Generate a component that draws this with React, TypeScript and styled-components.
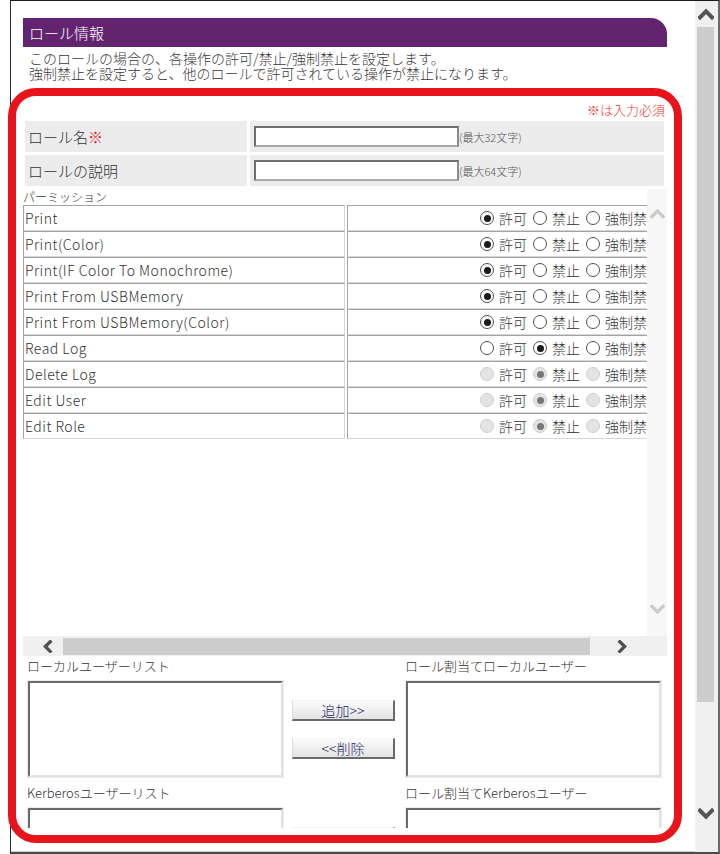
import React from "react";
import styled, { createGlobalStyle } from "styled-components";

const GlobalStyle = createGlobalStyle`
  html, body { margin: 0; padding: 0; background: #fff; }
  body { font-family: "Noto Sans CJK JP", "Noto Sans", sans-serif; font-weight: 300; color: #3c3c3c; }
  * { box-sizing: border-box; }
`;

type Dir = "up" | "down" | "left" | "right";
const rot: Record<Dir, number> = { up: 0, right: 90, down: 180, left: 270 };

const Chevron = ({ dir, size, color, weight }: { dir: Dir; size: number; color: string; weight: number }) => (
  <svg width={size} height={size} viewBox="0 0 12 12" style={{ display: "block" }}>
    <polyline
      points="1.5,8.5 6,4 10.5,8.5"
      fill="none"
      stroke={color}
      strokeWidth={weight}
      strokeLinecap="square"
      transform={`rotate(${rot[dir]} 6 6)`}
    />
  </svg>
);

const Window = styled.div`
  margin-left: 10px;
  width: 710px;
  height: 854px;
  display: flex;
  border-top: 1px solid #1a1a1a;
  border-left: 1px solid #2a2a2a;
  border-right: 2px solid #6a6a6a;
  border-bottom: 2px solid #4a4a4a;
  background: #fff;
`;

const Page = styled.div`
  flex: 1;
  display: flex;
  flex-direction: column;
  padding-top: 17px;
  min-width: 0;
`;

const TitleBar = styled.div`
  margin-left: 12px;
  width: 644px;
  height: 29px;
  background: #63246f;
  border-top-right-radius: 16px;
  color: #fff;
  font-size: 15px;
  line-height: 29px;
  padding-left: 6px;
`;

const Description = styled.p`
  margin: 4px 0 0 18px;
  font-size: 14px;
  line-height: 15px;
  color: #3a3a3a;
`;

const HighlightFrame = styled.section`
  margin: 7px 0 0 -3px;
  width: 674px;
  height: 755px;
  border: 8px solid #e8141c;
  border-radius: 28px;
`;

const Clip = styled.div`
  height: 732px;
  overflow: hidden;
`;

const RequiredNote = styled.div`
  margin-top: 5px;
  padding-right: 9px;
  text-align: right;
  font-size: 13px;
  line-height: 17px;
  color: #f0362c;
`;

const FieldTable = styled.div`
  margin: 3px 0 0 9px;
  width: 639px;
  display: grid;
  grid-template-columns: 222px 414px;
  grid-auto-rows: 31px;
  gap: 3px;
`;

const FieldLabel = styled.div`
  background: #ececec;
  display: flex;
  align-items: center;
  padding-left: 3px;
  font-size: 15px;
  color: #333;
`;

const Mark = styled.span`
  color: #ee2222;
`;

const FieldValue = styled.div`
  background: #ececec;
  display: flex;
  align-items: center;
  padding-left: 4px;
`;

const TextBox = styled.input`
  width: 205px;
  height: 21px;
  border-style: solid;
  border-width: 2px;
  border-color: #6e6e6e #8a8a8a #a8a8a8 #6e6e6e;
  background: #fff;
  padding: 0 2px;
  font: inherit;
`;

const Hint = styled.span`
  font-size: 11px;
  color: #555;
`;

const PermissionBox = styled.div`
  margin: 3px 0 0 7px;
  width: 644px;
  height: 467px;
  display: grid;
  grid-template-columns: 624px 20px;
  grid-template-rows: 447px 20px;
`;

const PermissionViewport = styled.div`
  overflow: hidden;
`;

const SectionLabel = styled.div`
  font-size: 12px;
  line-height: 16px;
  color: #333;
`;

const PermTable = styled.table`
  border-collapse: separate;
  border-spacing: 2px 0;
  margin-left: -2px;
  width: 646px;
  table-layout: fixed;
`;

const PermCell = styled.td<{ $kind: "name" | "radio" }>`
  height: 26px;
  padding: 0 ${(p) => (p.$kind === "radio" ? "3px" : "0")} 0 ${(p) => (p.$kind === "name" ? "1px" : "0")};
  border-top: 1px solid #a3a3a3;
  border-left: 1px solid #a3a3a3;
  border-bottom: 1px solid #d6d6d6;
  border-right: 1px solid #d6d6d6;
  font-size: 14px;
  letter-spacing: 0.5px;
  color: #333;
  white-space: nowrap;
  vertical-align: middle;
`;

const RadioGroup = styled.div`
  display: flex;
  justify-content: flex-end;
  gap: 6px;
`;

const RadioOption = styled.label`
  display: flex;
  align-items: center;
  gap: 5px;
  font-size: 14px;
  letter-spacing: 0;
  line-height: 18px;
  color: #333;
`;

const RadioMark = styled.span<{ $checked: boolean; $disabled: boolean }>`
  width: 14px;
  height: 14px;
  border-radius: 50%;
  display: inline-flex;
  align-items: center;
  justify-content: center;
  background: ${(p) => (p.$disabled ? "#e4e4e4" : "#fff")};
  border: ${(p) => (p.$disabled ? "1px solid #cdcdcd" : "1.5px solid #505050")};
  &::after {
    content: "";
    width: 7px;
    height: 7px;
    border-radius: 50%;
    background: ${(p) => (p.$disabled ? "#777" : "#1a1a1a")};
    display: ${(p) => (p.$checked ? "block" : "none")};
  }
`;

const VBar = styled.div`
  display: flex;
  flex-direction: column;
  align-items: center;
  background: #f7f7f7;
`;

const VArrow = styled.div<{ $h: number }>`
  height: ${(p) => p.$h}px;
  width: 100%;
  display: flex;
  align-items: center;
  justify-content: center;
`;

const Spacer = styled.div<{ $h?: number }>`
  flex: ${(p) => (p.$h ? `0 0 ${p.$h}px` : "1")};
`;

const HBar = styled.div`
  grid-column: 1 / span 2;
  display: flex;
  background: #f0f0f0;
`;

const HArrow = styled.div<{ $w: number; $pl?: number }>`
  width: ${(p) => p.$w}px;
  padding-left: ${(p) => p.$pl ?? 0}px;
  display: flex;
  align-items: center;
  justify-content: center;
`;

const HThumb = styled.div`
  width: 527px;
  margin: 2px 0 1px;
  background: #cdcdcd;
`;

const HGap = styled.div<{ $w: number }>`
  width: ${(p) => p.$w}px;
`;

const UserSection = styled.div`
  margin: 1px 0 0 11px;
  display: flex;
  flex-direction: column;
`;

const UserGroup = styled.div`
  display: grid;
  grid-template-columns: 256px 122px 256px;
  & + & {
    margin-top: 7px;
  }
`;

const ListLabel = styled.div`
  font-size: 13px;
  line-height: 18px;
  color: #333;
  margin-bottom: 6px;
`;

const ListBox = styled.div`
  margin-left: 1px;
  height: 96px;
  border-style: solid;
  border-width: 2px;
  border-color: #6a6a6a #e2e2e2 #e2e2e2 #6a6a6a;
  box-shadow: 0 0 0 1px #ececec;
  background: #fff;
`;

const ButtonColumn = styled.div`
  display: flex;
  flex-direction: column;
  padding: 19px 0 0 9px;
  gap: 17px;
`;

const ShuttleButton = styled.button`
  width: 103px;
  height: 21px;
  padding: 0;
  border-style: solid;
  border-width: 1px 2px 2px 1px;
  border-color: #f4f4f4 #6a6a6a #6a6a6a #dcdcdc;
  background: linear-gradient(#fcfcfc, #e3e3e3);
  font-family: inherit;
  font-weight: 300;
  font-size: 14px;
  line-height: 17px;
  color: #1f2868;
`;

const BottomStrip = styled.div`
  flex: 1;
  border-bottom: 1px solid #cfcfcf;
`;

const ScrollColumn = styled.div`
  width: 23px;
  background: #f0f0f0;
  display: flex;
  flex-direction: column;
  align-items: flex-start;
`;

const MainArrow = styled.div<{ $h: number }>`
  width: 21px;
  height: ${(p) => p.$h}px;
  display: flex;
  align-items: center;
  justify-content: center;
`;

const MainThumb = styled.div`
  margin-left: 2px;
  width: 17px;
  height: 675px;
  background: #cdcdcd;
`;

type Perm = { name: string; value: number; disabled: boolean };

const perms: Perm[] = [
  { name: "Print", value: 0, disabled: false },
  { name: "Print(Color)", value: 0, disabled: false },
  { name: "Print(IF Color To Monochrome)", value: 0, disabled: false },
  { name: "Print From USBMemory", value: 0, disabled: false },
  { name: "Print From USBMemory(Color)", value: 0, disabled: false },
  { name: "Read Log", value: 1, disabled: false },
  { name: "Delete Log", value: 1, disabled: true },
  { name: "Edit User", value: 1, disabled: true },
  { name: "Edit Role", value: 1, disabled: true },
];

const options = ["許可", "禁止", "強制禁止"];

const UserLists = ({ left, right }: { left: string; right: string }) => (
  <UserGroup>
    <ListLabel>{left}</ListLabel>
    <div />
    <ListLabel>{right}</ListLabel>
    <ListBox />
    <ButtonColumn>
      <ShuttleButton type="button">追加&gt;&gt;</ShuttleButton>
      <ShuttleButton type="button">&lt;&lt;削除</ShuttleButton>
    </ButtonColumn>
    <ListBox />
  </UserGroup>
);

export default function App() {
  return (
    <>
      <GlobalStyle />
      <Window>
        <Page>
          <TitleBar>ロール情報</TitleBar>
          <Description>
            このロールの場合の、各操作の許可/禁止/強制禁止を設定します。
            <br />
            強制禁止を設定すると、他のロールで許可されている操作が禁止になります。
          </Description>
          <HighlightFrame>
            <Clip>
              <RequiredNote>※は入力必須</RequiredNote>
              <FieldTable>
                <FieldLabel>
                  ロール名<Mark>※</Mark>
                </FieldLabel>
                <FieldValue>
                  <TextBox type="text" />
                  <Hint>(最大32文字)</Hint>
                </FieldValue>
                <FieldLabel>ロールの説明</FieldLabel>
                <FieldValue>
                  <TextBox type="text" />
                  <Hint>(最大64文字)</Hint>
                </FieldValue>
              </FieldTable>
              <PermissionBox>
                <PermissionViewport>
                  <SectionLabel>パーミッション</SectionLabel>
                  <PermTable>
                    <colgroup>
                      <col style={{ width: 322 }} />
                      <col style={{ width: 318 }} />
                    </colgroup>
                    <tbody>
                      {perms.map((p) => (
                        <tr key={p.name}>
                          <PermCell $kind="name">{p.name}</PermCell>
                          <PermCell $kind="radio">
                            <RadioGroup>
                              {options.map((o, i) => (
                                <RadioOption key={o}>
                                  <RadioMark $checked={p.value === i} $disabled={p.disabled} />
                                  {o}
                                </RadioOption>
                              ))}
                            </RadioGroup>
                          </PermCell>
                        </tr>
                      ))}
                    </tbody>
                  </PermTable>
                </PermissionViewport>
                <VBar>
                  <VArrow $h={48}>
                    <Chevron dir="up" size={15} color="#cbcbcb" weight={2.6} />
                  </VArrow>
                  <Spacer />
                  <VArrow $h={54}>
                    <Chevron dir="down" size={15} color="#cbcbcb" weight={2.6} />
                  </VArrow>
                </VBar>
                <HBar>
                  <HArrow $w={40} $pl={8}>
                    <Chevron dir="left" size={13} color="#505050" weight={3} />
                  </HArrow>
                  <HThumb />
                  <HGap $w={7} />
                  <HArrow $w={50}>
                    <Chevron dir="right" size={13} color="#505050" weight={3} />
                  </HArrow>
                  <HGap $w={20} />
                </HBar>
              </PermissionBox>
              <UserSection>
                <UserLists left="ローカルユーザーリスト" right="ロール割当てローカルユーザー" />
                <UserLists left="Kerberosユーザーリスト" right="ロール割当てKerberosユーザー" />
              </UserSection>
            </Clip>
          </HighlightFrame>
          <BottomStrip />
        </Page>
        <ScrollColumn>
          <MainArrow $h={26}>
            <Chevron dir="up" size={16} color="#555" weight={3} />
          </MainArrow>
          <MainThumb />
          <Spacer $h={100} />
          <MainArrow $h={24}>
            <Chevron dir="down" size={16} color="#555" weight={3} />
          </MainArrow>
          <Spacer />
        </ScrollColumn>
      </Window>
    </>
  );
}
